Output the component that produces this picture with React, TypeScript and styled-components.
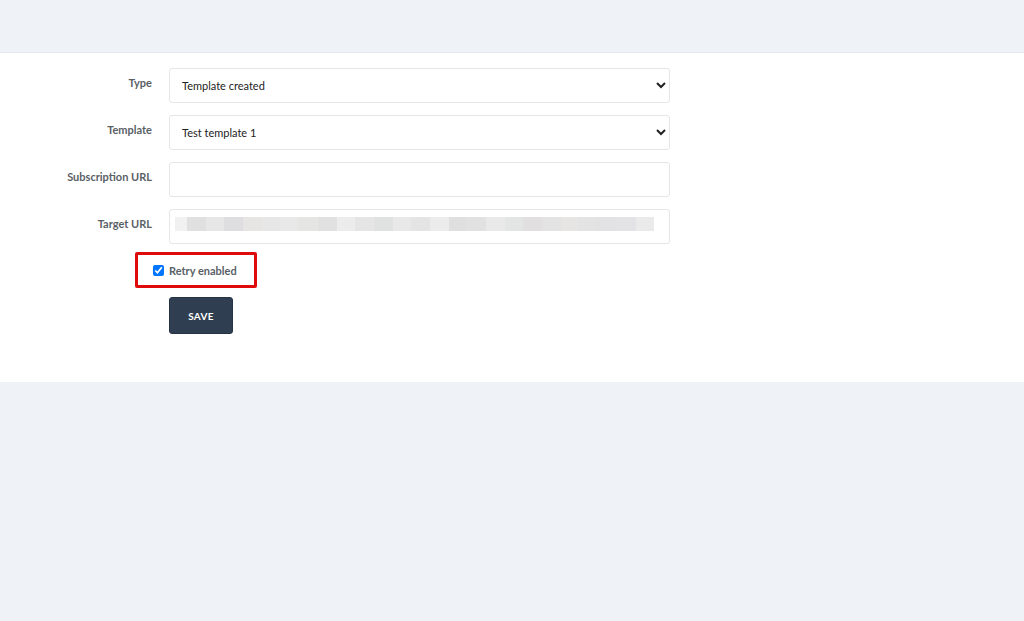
import React from "react";
import styled, { createGlobalStyle } from "styled-components";

const GlobalStyle = createGlobalStyle`
  html, body {
    margin: 0;
    padding: 0;
    background: #eff2f7;
    font-family: Lato, "Open Sans", Arial, sans-serif;
  }
`;

const Page = styled.div`
  min-height: 621px;
  background: #eff2f7;
  padding-top: 52px;
  box-sizing: border-box;
`;

const Panel = styled.div`
  background: #ffffff;
  border-top: 1px solid #e6eaf0;
  padding: 15px 0 48px;
  box-sizing: border-box;
`;

const Form = styled.form`
  display: grid;
  grid-template-columns: 152px 501px;
  column-gap: 17px;
  row-gap: 12px;
`;

const Label = styled.label`
  text-align: right;
  font-size: 11px;
  font-weight: 700;
  color: #5a5f66;
  padding-top: 8px;
`;

const fieldCss = `
  width: 100%;
  height: 35px;
  box-sizing: border-box;
  border: 1px solid #e6e6e6;
  border-radius: 3px;
  background: #fff;
  font-family: Lato, "Open Sans", Arial, sans-serif;
  font-size: 11px;
  color: #222;
  outline: none;
`;

const Select = styled.select`
  ${fieldCss}
  padding: 0 6px 0 8px;
`;

const TextInput = styled.input`
  ${fieldCss}
  padding: 0 12px;
`;

const BlurBox = styled.div`
  ${fieldCss}
  display: flex;
  align-items: flex-start;
  padding: 7px 0 0 5px;
`;

const BlurStrip = styled.div`
  display: flex;
  height: 14px;
`;

const BlurCell = styled.span<{ $w: number }>`
  width: ${(p) => p.$w}px;
  height: 100%;
`;

const CheckRow = styled.div`
  grid-column: 1 / span 2;
  margin-left: 135px;
  display: flex;
  margin-top: -4px;
`;

const Highlight = styled.div`
  display: flex;
  align-items: center;
  gap: 5px;
  height: 36px;
  box-sizing: border-box;
  border: 3px solid #df0a0a;
  border-radius: 2px;
  padding: 0 17px 0 15px;
`;

const Check = styled.input`
  margin: 0;
  width: 11px;
  height: 11px;
`;

const CheckText = styled.span`
  font-size: 11px;
  font-weight: 700;
  color: #5a5f66;
`;

const Actions = styled.div`
  grid-column: 2;
  margin-top: -3px;
`;

const SaveButton = styled.button`
  width: 64px;
  height: 37px;
  background: #2f3e51;
  border: 1px solid #263344;
  border-radius: 3px;
  color: #ffffff;
  font-family: Lato, "Open Sans", Arial, sans-serif;
  font-size: 10px;
  font-weight: 700;
  letter-spacing: 0.3px;
  cursor: pointer;
`;

const shades = [
  "#f1f1f1", "#e0e0e0", "#e7e7e7", "#dedee0", "#e6e5e3", "#e7e7e7",
  "#e8e8e8", "#e5e5e3", "#e1e1e1", "#ececec", "#e5e5e5", "#e0e2e1",
  "#e8e8e8", "#e4e4e4", "#ececec", "#dfdfdf", "#e1e1e1", "#e9e9e9",
  "#e3e5e4", "#e1dfe0", "#e3e3e3", "#e6e5e3", "#e3e3e3", "#e2e2e4",
  "#e3e3e5", "#eaeaea",
];

export default function App() {
  return (
    <>
      <GlobalStyle />
      <Page>
        <Panel>
          <Form onSubmit={(e) => e.preventDefault()}>
            <Label>Type</Label>
            <Select defaultValue="created">
              <option value="created">Template created</option>
              <option value="updated">Template updated</option>
            </Select>

            <Label>Template</Label>
            <Select defaultValue="t1">
              <option value="t1">Test template 1</option>
              <option value="t2">Test template 2</option>
            </Select>

            <Label>Subscription URL</Label>
            <TextInput type="text" />

            <Label>Target URL</Label>
            <BlurBox>
              <BlurStrip>
                {shades.map((c, i) => (
                  <BlurCell
                    key={i}
                    $w={i === 0 ? 12 : 18.7}
                    style={{ background: c }}
                  />
                ))}
              </BlurStrip>
            </BlurBox>

            <CheckRow>
              <Highlight>
                <Check type="checkbox" defaultChecked />
                <CheckText>Retry enabled</CheckText>
              </Highlight>
            </CheckRow>

            <Actions>
              <SaveButton type="submit">SAVE</SaveButton>
            </Actions>
          </Form>
        </Panel>
      </Page>
    </>
  );
}
